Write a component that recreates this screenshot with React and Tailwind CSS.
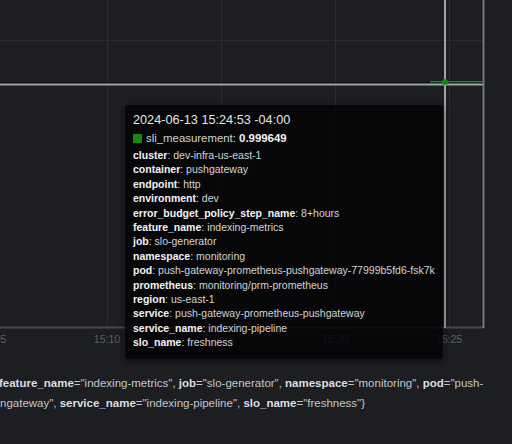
import React from 'react';

const labels = [
  ['cluster', 'dev-infra-us-east-1'],
  ['container', 'pushgateway'],
  ['endpoint', 'http'],
  ['environment', 'dev'],
  ['error_budget_policy_step_name', '8+hours'],
  ['feature_name', 'indexing-metrics'],
  ['job', 'slo-generator'],
  ['namespace', 'monitoring'],
  ['pod', 'push-gateway-prometheus-pushgateway-77999b5fd6-fsk7k'],
  ['prometheus', 'monitoring/prm-prometheus'],
  ['region', 'us-east-1'],
  ['service', 'push-gateway-prometheus-pushgateway'],
  ['service_name', 'indexing-pipeline'],
  ['slo_name', 'freshness'],
];

const gridX = [107, 221, 335, 449];
const ticks = [
  { x: -7, label: '15:05' },
  { x: 107, label: '15:10' },
  { x: 221, label: '15:15' },
  { x: 335, label: '15:20' },
  { x: 449, label: '15:25' },
];

const Chart = () => (
  <svg width="512" height="352" className="block">
    {/* grid */}
    {gridX.map((x) => (
      <line key={x} x1={x + 0.5} y1="0" x2={x + 0.5} y2="327" stroke="#2a2c31" strokeWidth="1" />
    ))}
    <line x1="0" y1="40.5" x2="483" y2="40.5" stroke="#2a2c31" strokeWidth="1" />

    {/* frame */}
    <line x1="0" y1="327.5" x2="484" y2="327.5" stroke="#4a4b50" strokeWidth="2" />
    <line x1="483.5" y1="0" x2="483.5" y2="328" stroke="#76777b" strokeWidth="2" />

    {/* series */}
    <line x1="430" y1="82" x2="483" y2="82" stroke="#148a14" strokeWidth="2" />

    {/* crosshair */}
    <line x1="0" y1="83" x2="483" y2="83" stroke="#000" strokeWidth="1" />
    <line x1="0" y1="84.5" x2="483" y2="84.5" stroke="#a3a3a5" strokeWidth="2" />
    <line x1="445" y1="0" x2="445" y2="328" stroke="#a3a3a5" strokeWidth="2" />
    <circle cx="445" cy="82" r="3" fill="#148a14" />

    {/* x axis */}
    {ticks.map((t) => (
      <text
        key={t.label}
        x={t.x}
        y="343"
        textAnchor="middle"
        fontSize="10.5"
        fontFamily="'Liberation Sans', Arial, sans-serif"
        fill="#5c5e63"
      >
        {t.label}
      </text>
    ))}
  </svg>
);

const Tooltip = () => (
  <div className="absolute left-[125px] top-[105px] w-[318px] h-[254px] bg-[rgba(3,4,5,0.84)] rounded-[3px] shadow-[0_2px_8px_rgba(0,0,0,0.5)] pl-[8px] pt-[7px] text-[#d2d3d6]">
    <div className="text-[12.7px] leading-[16px] text-[#e4e5e7] whitespace-nowrap">
      2024-06-13 15:24:53 -04:00
    </div>
    <div className="mt-[2px] flex items-center gap-[4px] text-[11.4px] leading-[16px] whitespace-nowrap">
      <span className="w-[9px] h-[9px] bg-[#128a12]" />
      <span>
        sli_measurement: <b className="font-bold text-[#f2f2f3]">0.999649</b>
      </span>
    </div>
    <div className="mt-[2px]">
      {labels.map(([k, v]) => (
        <div key={k} className="text-[10.5px] leading-[14.4px] whitespace-nowrap">
          <b className="font-bold text-[#f2f2f3]">{k}</b>: {v}
        </div>
      ))}
    </div>
  </div>
);

const B = ({ children }) => <b className="font-bold text-[#dcdde0]">{children}</b>;

export default function App() {
  return (
    <div className="w-[512px] h-[444px] bg-[#1c1e22] overflow-hidden font-['Liberation_Sans',Arial,sans-serif]">
      <div className="relative">
        <Chart />
        <Tooltip />
      </div>
      <div className="mt-[21px] text-[11.5px] leading-[20px] text-[#c4c5c9] whitespace-nowrap">
        <div className="ml-[-1px]">
          <B>feature_name</B>="indexing-metrics", <B>job</B>="slo-generator", <B>namespace</B>="monitoring", <B>pod</B>="push-
        </div>
        <div>
          ngateway", <B>service_name</B>="indexing-pipeline", <B>slo_name</B>="freshness"{'}'}
        </div>
      </div>
    </div>
  );
}
